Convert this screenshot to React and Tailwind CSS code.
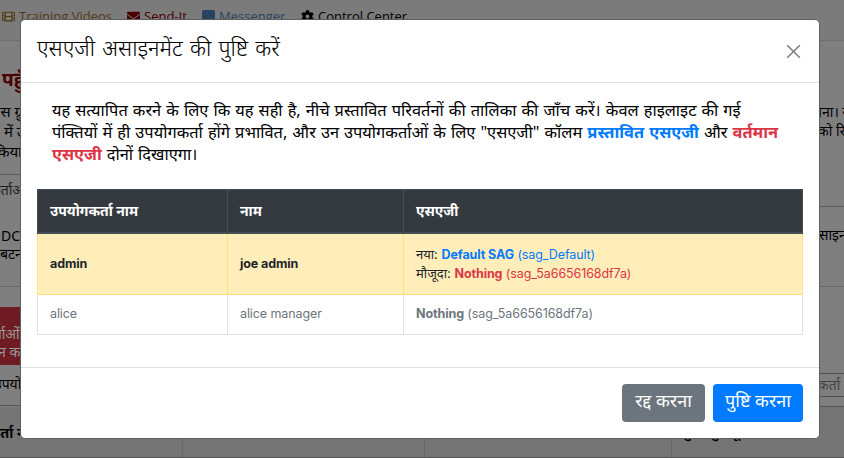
import { FaFilm, FaEnvelope, FaCog } from 'react-icons/fa';

function NavBar() {
  return (
    <nav className="flex h-[41px] shrink-0 items-start border-b border-[#707070] bg-[#7b7b7b] pl-[2px] pt-[7px] font-['Open_Sans'] text-[13px] leading-[18px]">
      <span className="flex w-[125px] items-center text-[#4f3a14]"><FaFilm size={13} className="mr-[4px] shrink-0" /><span className="whitespace-nowrap">Training Videos</span></span>
      <span className="flex w-[75px] items-center text-[#480000]"><FaEnvelope size={13} className="mr-[4px] shrink-0" /><span>Send-It</span></span>
      <span className="flex w-[99px] items-center text-[#28435f]"><span className="mr-[4px] h-[12px] w-[13px] shrink-0 rounded-[2px] bg-[#28435f]" /><span>Messenger</span></span>
      <span className="flex items-center text-black"><FaCog size={13} className="mr-[4px] shrink-0" /><span className="whitespace-nowrap">Control Center</span></span>
    </nav>
  );
}

function Page() {
  return (
    <div className="flex h-[458px] flex-col overflow-hidden">
      <NavBar />
      <div className="flex flex-1 justify-between whitespace-nowrap text-[14px] text-black">
        <div className="flex w-[90px] flex-col">
          <div className="h-[60px] pl-[2px] pt-[26px] text-[19px] font-bold leading-6 text-[#480000]">पहुँच</div>
          <div className="flex h-[74px] flex-col border-b border-[#5f5f5f] text-[15px] leading-5">
            <span className="-ml-[12px]">पास ग्रुप</span>
            <span className="pl-[4px]">में उप</span>
            <span className="-ml-[6px]">किया</span>
          </div>
          <div className="h-[52px] pt-[5px] text-[14px] leading-5 text-[#222]"><span className="-ml-[10px]">कर्ताओं</span></div>
          <div className="flex h-[60px] flex-col border-b border-[#686868] leading-[18px]"><span className="ml-[1px]">DCa</span><span>बटन</span></div>
          <div className="mt-[20px] flex h-[58px] shrink-0 flex-col bg-[#6e1b24] pt-[18px] text-[14px] leading-[18px] text-[#999]"><span className="-ml-[17px]">कर्ताओं</span><span className="-ml-[13px]">दान करें</span></div>
          <div className="h-[41px] border-b border-[#555] pt-[9px] leading-5"><span className="-ml-[6px]">उपयोग</span></div>
        </div>
        <div className="flex w-[25px] flex-col">
          <div className="h-[166px] border-b border-[#5f5f5f] pt-[61px] text-[14px] leading-[19px]"><div className="-ml-[9px]">माना। य</div><div className="-ml-[1px]">को रि</div></div>
          <div className="h-[80px] border-b border-[#686868] pt-[18px] leading-5">साइन</div>
          <div className="mt-[86px] h-[24px] border-y border-[#505050] text-[14px] leading-[21px] text-[#444]"><span className="-ml-[1px]">कर्ता</span></div>
          <div className="mt-[9px] h-px bg-[#555]" />
        </div>
      </div>
      <div className="flex h-[51px] shrink-0 border-b border-[#555] bg-[#757575] text-[14px] font-bold leading-[52px]">
        <div className="w-[183px] border-r border-[#686868]"><span className="-ml-[11px]">कर्ता नाम</span></div>
        <div className="w-[242px] border-r border-[#686868]" />
        <div className="w-[247px] border-r border-[#686868]" />
        <div className="whitespace-nowrap pl-[10px] leading-[50px]">गुणा ग्रुप कू, ड</div>
      </div>
    </div>
  );
}

const latin = 'text-[12.5px] tracking-[-0.1px]';

function Modal() {
  return (
    <div className="absolute left-[20px] top-[19px] flex h-[420px] w-[800px] flex-col rounded-[5px] border border-[#5f5f5f] bg-white text-black">
      <header className="flex h-[63px] shrink-0 justify-between border-b border-[#dee2e6] pl-4 pr-[18px]">
        <h5 className="whitespace-nowrap pt-[12px] text-[22px] font-light leading-[31px] [word-spacing:1.5px]">एसएजी असाइनमेंट की पुष्टि करें</h5>
        <svg width="15" height="15" viewBox="0 0 15 15" className="mt-[24px]" stroke="#808080" strokeWidth="1.6"><path d="M1.2 1.2 13.8 13.8M13.8 1.2 1.2 13.8" /></svg>
      </header>
      <div className="flex flex-1 flex-col px-4 pt-4">
        <p className="whitespace-nowrap px-[15px] text-[16.4px] leading-[22px] [word-spacing:0.8px]">
          यह सत्यापित करने के लिए कि यह सही है, नीचे प्रस्तावित परिवर्तनों की तालिका की जाँच करें। केवल हाइलाइट की गई<br />
          पंक्तियों में ही उपयोगकर्ता होंगे प्रभावित, और उन उपयोगकर्ताओं के लिए "एसएजी" कॉलम <b className="text-[#007bff]">प्रस्तावित एसएजी</b> और <b className="text-[#dc3545]">वर्तमान</b><br />
          <b className="text-[#dc3545]">एसएजी</b> दोनों दिखाएगा।
        </p>
        <table className="mt-[24px] w-[766px] table-fixed border-collapse text-left font-['Inter','Noto_Sans',sans-serif] text-[13px] leading-[18px]">
          <colgroup><col className="w-[190px]" /><col className="w-[176px]" /><col /></colgroup>
          <thead>
            <tr className="h-[43px] bg-[#343a40] text-white">
              {['उपयोगकर्ता नाम', 'नाम', 'एसएजी'].map((t) => <th key={t} className="border border-b-2 border-[#454d55] px-3 py-0 text-[14px]">{t}</th>)}
            </tr>
          </thead>
          <tbody>
            <tr className="h-[62px] bg-[#ffeeba] text-[#212529]">
              <td className="border border-[#ffdf7e] px-3 py-0 font-bold"><span className={latin}>admin</span></td>
              <td className="border border-[#ffdf7e] px-3 py-0 font-bold"><span className={latin}>joe admin</span></td>
              <td className="border border-[#ffdf7e] px-3 py-0">
                <div>नया: <span className={`${latin} text-[#007bff]`}><b>Default SAG</b> (sag_Default)</span></div>
                <div>मौजूदा: <span className={`${latin} text-[#dc3545]`}><b>Nothing</b> (sag_5a6656168df7a)</span></div>
              </td>
            </tr>
            <tr className="h-[40px] text-[#6c757d]">
              <td className="border border-[#dee2e6] px-3 pb-[2px] pt-0"><span className={latin}>alice</span></td>
              <td className="border border-[#dee2e6] px-3 pb-[2px] pt-0"><span className={latin}>alice manager</span></td>
              <td className="border border-[#dee2e6] px-3 pb-[2px] pt-0"><span className={latin}><b>Nothing</b> (sag_5a6656168df7a)</span></td>
            </tr>
          </tbody>
        </table>
      </div>
      <footer className="flex h-[71px] shrink-0 justify-end gap-2 border-t border-[#dee2e6] pr-4 pt-4 text-[18px] leading-[32px] text-white">
        <button className="h-[38px] w-[83px] whitespace-nowrap rounded bg-[#6c757d] pb-[6px]">रद्द करना</button>
        <button className="h-[38px] w-[90px] whitespace-nowrap rounded bg-[#007bff] pb-[6px]">पुष्टि करना</button>
      </footer>
    </div>
  );
}

export default function App() {
  return (
    <div className="relative h-[458px] w-[844px] overflow-hidden bg-[#7f7f7f] font-['Noto_Sans','Open_Sans',sans-serif]">
      <Page />
      <Modal />
    </div>
  );
}
